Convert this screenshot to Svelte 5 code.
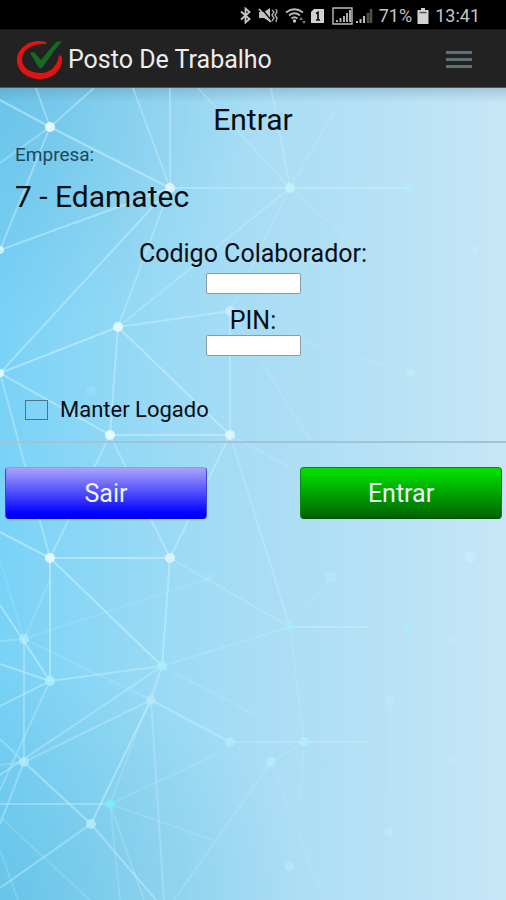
<script>
  let codigo = $state('');
  let pin = $state('');
  let manter = $state(false);

  // [x1, y1, x2, y2, opacity]
  const links = [
    [0, 100, 50, 127, 0.5], [36, 88, 50, 127, 0.4], [94, 88, 50, 127, 0.4], [0, 163, 50, 127, 0.35],
    [50, 127, 170, 188, 0.5], [50, 127, 0, 250, 0.4], [133, 88, 170, 188, 0.35], [170, 88, 170, 188, 0.35],
    [170, 188, 290, 188, 0.35], [290, 188, 409, 188, 0.4], [198, 88, 290, 188, 0.25], [271, 88, 290, 188, 0.3],
    [335, 110, 290, 188, 0.18], [0, 250, 170, 188, 0.45], [170, 188, 0, 373, 0.45], [170, 188, 118, 327, 0.35],
    [118, 327, 290, 188, 0.3], [118, 327, 230, 311, 0.4], [230, 311, 290, 188, 0.2], [0, 373, 118, 327, 0.5],
    [118, 327, 110, 435, 0.45], [118, 327, 230, 435, 0.45], [0, 373, 110, 435, 0.5], [0, 373, 50, 558, 0.4],
    [110, 435, 230, 435, 0.45], [230, 311, 230, 435, 0.4], [110, 435, 50, 558, 0.4], [110, 435, 170, 558, 0.4],
    [230, 435, 170, 558, 0.4], [230, 435, 290, 627, 0.28], [230, 311, 310, 440, 0.18], [290, 188, 360, 250, 0.12],
    [230, 435, 290, 467, 0.2], [300, 340, 410, 373, 0.12], [0, 532, 50, 558, 0.5], [50, 558, 170, 558, 0.5],
    [50, 558, 50, 681, 0.5], [50, 558, 162, 666, 0.5], [170, 558, 162, 666, 0.45], [170, 558, 290, 627, 0.25],
    [0, 605, 50, 681, 0.5], [24, 639, 0, 560, 0.15], [24, 639, 50, 580, 0.2], [0, 641, 24, 639, 0.25],
    [24, 639, 210, 578, 0.15], [24, 639, 151, 700, 0.18], [24, 639, 24, 762, 0.35], [0, 664, 50, 681, 0.45],
    [0, 706, 50, 681, 0.4], [50, 681, 162, 666, 0.4], [50, 681, 0, 790, 0.3], [162, 666, 0, 775, 0.35],
    [162, 666, 290, 627, 0.22], [162, 666, 151, 700, 0.25], [162, 666, 253, 714, 0.15], [151, 700, 24, 762, 0.3],
    [151, 700, 91, 824, 0.45], [151, 700, 230, 742, 0.35], [151, 700, 164, 900, 0.28], [162, 666, 110, 804, 0.2],
    [0, 739, 24, 762, 0.3], [0, 765, 24, 762, 0.25], [24, 762, 0, 824, 0.35], [24, 762, 91, 824, 0.45],
    [0, 804, 110, 804, 0.35], [0, 817, 90, 900, 0.2], [0, 850, 18, 900, 0.2], [0, 888, 91, 824, 0.4],
    [91, 824, 156, 900, 0.4], [110, 804, 144, 900, 0.22], [110, 804, 120, 900, 0.2], [110, 804, 215, 755, 0.18],
    [110, 804, 213, 840, 0.18], [174, 900, 271, 762, 0.2], [230, 742, 370, 742, 0.28], [290, 627, 368, 627, 0.35],
    [290, 627, 304, 742, 0.15], [304, 742, 271, 762, 0.15], [304, 742, 300, 800, 0.15], [271, 762, 320, 890, 0.12],
    [390, 700, 390, 790, 0.18], [290, 627, 331, 577, 0.1]
  ];

  // [x, y, radius, opacity, colour]
  const nodes = [
    [50, 127, 5, 0.85, '#f4fcff'], [170, 188, 5, 0.75, '#eefaff'], [0, 250, 4, 0.7, '#eefaff'],
    [118, 327, 5, 0.8, '#effbff'], [230, 311, 5, 0.5, '#dff8ff'], [0, 373, 4, 0.85, '#effbff'],
    [110, 435, 5, 0.85, '#f2fcff'], [230, 435, 5, 0.75, '#eafaff'], [290, 188, 5, 0.8, '#c4f4fd'],
    [409, 188, 5, 0.6, '#b4effb'], [410, 373, 4, 0.5, '#b9f3fc'], [475, 250, 4, 0.25, '#d6f4ff'],
    [91, 391, 5, 0.25, '#b0f0ff'], [50, 558, 5, 0.9, '#eaf8ff'], [170, 558, 5, 0.85, '#e2f4ff'],
    [210, 578, 5, 0.45, '#a3e6f5'], [24, 639, 5, 0.6, '#b5f0ff'], [50, 681, 5, 0.8, '#a9f2ff'],
    [162, 666, 5, 0.8, '#a9f0fb'], [151, 700, 5, 0.7, '#b9e9fb'], [24, 762, 5, 0.7, '#b3edff'],
    [91, 824, 5, 0.75, '#b9efff'], [110, 804, 5, 0.8, '#77efef'], [230, 742, 5, 0.7, '#adf0fb'],
    [304, 742, 5, 0.7, '#b3effc'], [271, 762, 5, 0.7, '#b5f0fc'], [290, 627, 5, 0.7, '#9deffa'],
    [409, 627, 5, 0.5, '#a9effa'], [331, 577, 6, 0.4, '#b9effa'], [470, 557, 6, 0.4, '#d0f4ff'],
    [390, 700, 5, 0.35, '#bdf3fc'], [389, 832, 5, 0.5, '#c0effc'], [289, 866, 5, 0.6, '#b0effb'],
    [451, 640, 4, 0.3, '#cdf2ff'], [451, 760, 4, 0.4, '#c9f3fd']
  ];
</script>

<div class="app">
  <div class="status">
    <svg width="13" height="17" viewBox="0 0 13 17" aria-hidden="true">
      <path d="M2 4.5 10.5 12 6.5 15.5V1.5L10.5 5 2 12.5" fill="none" stroke="#c6c6c6" stroke-width="1.8" />
    </svg>
    <svg class="mute" width="20" height="17" viewBox="0 0 20 17" aria-hidden="true">
      <path d="M1 5h5l6-4v14l-6-4H1z" fill="#c0c0c0" />
      <path d="M3 1 13 13" stroke="#000" stroke-width="1.4" />
      <path d="M1 2 13 15" stroke="#c0c0c0" stroke-width="1.8" />
      <path d="M14 3l2 2-2 3 2 3-2 3M18 2l1 3-2 3 2 3-1 4" fill="none" stroke="#a8a8a8" stroke-width="1.4" />
    </svg>
    <svg class="wifi" width="22" height="17" viewBox="0 0 22 17" aria-hidden="true">
      <path d="M1 5.5Q9.5-1 18 5.5M4 8.5Q9.5 4 15 8.5M6.5 11.5Q9.5 9 12.5 11.5" fill="none" stroke="#b8b8b8" stroke-width="1.9" />
      <circle cx="9.5" cy="14" r="1.7" fill="#c6c6c6" />
      <path d="M14 13l2-3 2 3zM17 14h4l-2 3z" fill="#777" />
    </svg>
    <svg class="sim" width="15" height="16" viewBox="0 0 15 16" aria-hidden="true">
      <path d="M4 1h10v14H1V4z" fill="#d2d2d2" />
      <path d="M6 5.5 8 4.5V12M6 12h4" fill="none" stroke="#111" stroke-width="1.7" />
    </svg>
    <svg class="signal" width="21" height="18" viewBox="0 0 21 18" aria-hidden="true">
      <path d="M1 1h19v16H1z" fill="none" stroke="#bdbdbd" stroke-width="1.4" />
      <path d="M5 15v-2M8.5 15v-4M12 15V9M15 15V6M18 15V3" stroke="#b5b5b5" stroke-width="1.9" />
    </svg>
    <svg class="signal2" width="17" height="16" viewBox="0 0 17 16" aria-hidden="true">
      <path d="M1 15v-2M4.5 15v-4M8 15V8" stroke="#bbb" stroke-width="2" />
      <path d="M12 15V5M15 15V1" stroke="#4e4e4e" stroke-width="2.6" />
    </svg>
    <span class="percent">71%</span>
    <svg class="battery" width="12" height="16" viewBox="0 0 12 16" aria-hidden="true">
      <path d="M4 0h4v2h3.5v14H.5V2H4z" fill="#d4d4d4" />
      <path d="M2.5 3.800h7v1.500h-7z" fill="#555" />
    </svg>
    <time>13:41</time>
  </div>

  <header>
    <svg class="logo" width="48" height="42" viewBox="0 0 48 42" aria-hidden="true">
      <path d="M30 3C15-1 1 9 1 21c0 11 10 19 23 19 13 0 23-9 22-22l-3-2c-1 10-8 18-18 18C14 34 6 29 6 20 6 11 16 4 30 5z" fill="#e41313" />
      <path d="M14 14l4-1 7 8L40 3l6-1-8 10-12 17h-3z" fill="#176a22" />
    </svg>
    <h1>Posto De Trabalho</h1>
    <button class="menu" type="button" aria-label="Menu">
      <span></span><span></span><span></span>
    </button>
  </header>

  <main>
    <svg class="network" viewBox="0 88 506 812" preserveAspectRatio="xMinYMin slice" aria-hidden="true">
      {#each links as [x1, y1, x2, y2, o]}
        <line {x1} {y1} {x2} {y2} stroke="#d3f6ff" stroke-width="2" stroke-opacity={o} />
      {/each}
      {#each nodes as [cx, cy, r, o, fill]}
        <circle {cx} {cy} {r} {fill} fill-opacity={o} />
      {/each}
    </svg>

    <form onsubmit={(e) => e.preventDefault()}>
      <h2>Entrar</h2>
      <p class="caption">Empresa:</p>
      <p class="company">7 - Edamatec</p>

      <div class="field">
        <label for="codigo">Codigo Colaborador:</label>
        <input class="box first" id="codigo" type="text" bind:value={codigo} />
        <label for="pin">PIN:</label>
        <input class="box" id="pin" type="password" bind:value={pin} />
      </div>

      <label class="keep">
        <input type="checkbox" bind:checked={manter} />
        Manter Logado
      </label>

      <hr />

      <div class="actions">
        <button class="exit" type="button">Sair</button>
        <button class="enter" type="submit">Entrar</button>
      </div>
    </form>
  </main>
</div>

<style>
  .app {
    min-height: 100vh;
    display: flex;
    flex-direction: column;
    font-family: Roboto, 'Liberation Sans', sans-serif;
    color: #060d14;
  }

  .status {
    display: flex;
    align-items: center;
    justify-content: flex-end;
    box-sizing: border-box;
    height: 29px;
    padding: 2px 26px 0 0;
    background: #000;
    color: #c4c4c4;
    font-size: 18px;
    line-height: 20px;
  }
  .status svg { flex: none; }
  .mute { margin-left: 6px; }
  .wifi { margin-left: 7px; }
  .sim { margin-left: 3px; }
  .signal { margin-left: 7px; }
  .signal2 { margin-left: 3px; }
  .percent { margin-left: 6px; }
  .battery { margin: 0 6px 0 5px; }

  header {
    display: flex;
    align-items: center;
    box-sizing: border-box;
    height: 59px;
    padding: 2px 34px 0 16px;
    background: #222;
    border-top: 1px solid #191919;
    border-bottom: 1px solid #4b565c;
  }
  h1 {
    flex: 1;
    margin: 0 0 0 4px;
    color: #ededed;
    font-size: 25px;
    font-weight: 400;
    line-height: 32px;
  }
  .menu {
    display: flex;
    flex-direction: column;
    gap: 4px;
    padding: 8px 0;
    width: 26px;
    border: 0;
    background: none;
  }
  .menu span {
    height: 3px;
    background: #5a7175;
  }

  main {
    position: relative;
    flex: 1;
    overflow: hidden;
    background:
      linear-gradient(180deg, rgba(90, 130, 150, 0.3), rgba(90, 130, 150, 0) 14px),
      radial-gradient(ellipse 50% 30% at 0 0, rgba(70, 160, 200, 0.3), rgba(70, 160, 200, 0)),
      radial-gradient(ellipse 60% 30% at 0 100%, rgba(70, 170, 205, 0.35), rgba(70, 170, 205, 0)),
      linear-gradient(90deg, #79d2f7 0%, #88d6f6 14%, #9bdaf5 33%, #a9ddf4 52%, #b3e0f5 70%, #bfe4f6 88%, #c8e5f7 100%);
  }
  .network {
    position: absolute;
    inset: 0;
    width: 100%;
    height: 100%;
  }
  form {
    position: relative;
    padding-top: 17px;
  }
  h2 {
    margin: 0;
    font-size: 30px;
    font-weight: 400;
    line-height: 30px;
    text-align: center;
  }
  .caption {
    margin: 8px 15px 0;
    color: #21485a;
    font-size: 19px;
    line-height: 24px;
  }
  .company {
    margin: 12px 15px 0;
    font-size: 30px;
    line-height: 36px;
  }
  .field {
    display: flex;
    flex-direction: column;
    align-items: center;
    margin-top: 25px;
    font-size: 25px;
    line-height: 28px;
  }
  .box {
    box-sizing: border-box;
    width: 95px;
    height: 21px;
    padding: 0 4px;
    border: 1px solid #8c9ba3;
    border-radius: 2px;
    background: #fff;
    font: 16px Roboto, sans-serif;
  }
  .first { margin: 5px 0 13px; }
  .keep {
    display: flex;
    align-items: center;
    gap: 12px;
    margin: 40px 0 0 25px;
    font-size: 22px;
    line-height: 28px;
  }
  .keep input {
    appearance: none;
    box-sizing: border-box;
    width: 23px;
    height: 20px;
    margin: 0;
    border: 1px solid #4d7486;
  }
  .keep input:checked { background: #4d7486; }
  hr {
    height: 2px;
    margin: 17px 0 24px;
    border: 0;
    background: #a3c3d4;
  }
  .actions {
    display: flex;
    justify-content: space-between;
    padding: 0 4px 24px 5px;
  }
  .actions button {
    width: 202px;
    max-width: 45%;
    height: 52px;
    padding: 0;
    border-radius: 4px;
    color: #f1f4fb;
    font: 25px Roboto, sans-serif;
  }
  .exit {
    border: 1px solid #5a5ad0;
    border-color: #9b97dd #4040e0 #0000d8;
    background: linear-gradient(#aaa4fb, #0000ff 92%);
  }
  .enter {
    border: 1px solid #0a8a0a;
    border-bottom-color: #055005;
    background: linear-gradient(#00dc00 8%, #006200);
  }
</style>
